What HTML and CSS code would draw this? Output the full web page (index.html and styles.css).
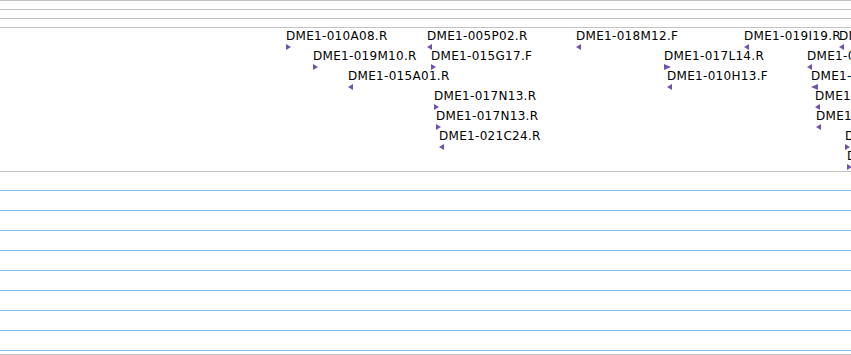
FILE: index.html
```html
<!DOCTYPE html>
<html>
<head>
<meta charset="utf-8">
<link rel="stylesheet" href="styles.css">
</head>
<body>
<div class="browser">
  <div class="ruler">
    <div class="ruler-row"></div>
    <div class="ruler-row"></div>
    <div class="ruler-row"></div>
  </div>
  <div class="track">
    <div class="feat" style="left:286px;top:1px"><span class="name">DME1-010A08.R</span><i class="tri right"></i></div>
    <div class="feat" style="left:427px;top:1px"><span class="name">DME1-005P02.R</span><i class="tri left"></i></div>
    <div class="feat" style="left:576px;top:1px"><span class="name">DME1-018M12.F</span><i class="tri left"></i></div>
    <div class="feat" style="left:744px;top:1px"><span class="name">DME1-019I19.R</span><i class="tri left"></i></div>
    <div class="feat" style="left:839px;top:1px"><span class="name">DME1-008K05.R</span><i class="tri left"></i></div>

    <div class="feat" style="left:313px;top:21px"><span class="name">DME1-019M10.R</span><i class="tri right"></i></div>
    <div class="feat" style="left:431px;top:21px"><span class="name">DME1-015G17.F</span><i class="tri right"></i></div>
    <div class="feat" style="left:664px;top:21px"><span class="name">DME1-017L14.R</span><i class="tri right wide"></i></div>
    <div class="feat" style="left:807px;top:21px"><span class="name">DME1-006C11.R</span><i class="tri left"></i></div>

    <div class="feat" style="left:348px;top:41px"><span class="name">DME1-015A01.R</span><i class="tri left"></i></div>
    <div class="feat" style="left:667px;top:41px"><span class="name">DME1-010H13.F</span><i class="tri left"></i></div>
    <div class="feat" style="left:811px;top:41px"><span class="name">DME1-012D07.R</span><i class="tri left wide"></i></div>

    <div class="feat" style="left:434px;top:61px"><span class="name">DME1-017N13.R</span><i class="tri right"></i></div>
    <div class="feat" style="left:815px;top:61px"><span class="name">DME1-003B22.F</span><i class="tri left"></i></div>

    <div class="feat" style="left:436px;top:81px"><span class="name">DME1-017N13.R</span><i class="tri right"></i></div>
    <div class="feat" style="left:816px;top:81px"><span class="name">DME1 004E18.R</span><i class="tri left"></i></div>

    <div class="feat" style="left:439px;top:101px"><span class="name">DME1-021C24.R</span><i class="tri left"></i></div>
    <div class="feat" style="left:845px;top:101px"><span class="name">DME1-011F09.R</span><i class="tri right"></i></div>

    <div class="feat" style="left:847px;top:121px"><span class="name">DME1-016J02.F</span><i class="tri right"></i></div>
  </div>
  <div class="grid">
    <div class="grid-row"></div>
    <div class="grid-row"></div>
    <div class="grid-row"></div>
    <div class="grid-row"></div>
    <div class="grid-row"></div>
    <div class="grid-row"></div>
    <div class="grid-row"></div>
    <div class="grid-row"></div>
    <div class="grid-row last"></div>
  </div>
</div>
</body>
</html>
```

FILE: styles.css
```css
html, body {
  margin: 0;
  padding: 0;
  background: #ffffff;
}
body {
  width: 851px;
  height: 355px;
  overflow: hidden;
  font-family: "DejaVu Sans", Verdana, sans-serif;
}
.browser {
  display: flex;
  flex-direction: column;
  width: 851px;
}
.ruler {
  display: flex;
  flex-direction: column;
}
.ruler-row {
  height: 8px;
  border-top: 1px solid #c3c3c3;
}
.track {
  position: relative;
  height: 143px;
  border-top: 1px solid #c3c3c3;
  border-bottom: 1px solid #c3c3c3;
  overflow: hidden;
}
.feat {
  position: absolute;
  display: flex;
  flex-direction: column;
  align-items: flex-start;
  white-space: nowrap;
}
.name {
  font-size: 12px;
  line-height: 14px;
  letter-spacing: 0.3px;
  color: #000000;
}
.tri {
  display: block;
  width: 0;
  height: 0;
  margin-top: 1px;
  border-top: 3px solid transparent;
  border-bottom: 3px solid transparent;
}
.tri.right {
  border-left: 5px solid #6f52ad;
}
.tri.left {
  border-right: 5px solid #6f52ad;
}
.tri.right.wide {
  border-left-width: 7px;
}
.tri.left.wide {
  border-right-width: 7px;
}
.grid {
  display: flex;
  flex-direction: column;
  padding-top: 18px;
}
.grid-row {
  height: 19px;
  border-top: 1px solid #84bce6;
}
.grid-row.last {
  height: 3px;
  border-bottom: 1px solid #c3c3c3;
}
```
